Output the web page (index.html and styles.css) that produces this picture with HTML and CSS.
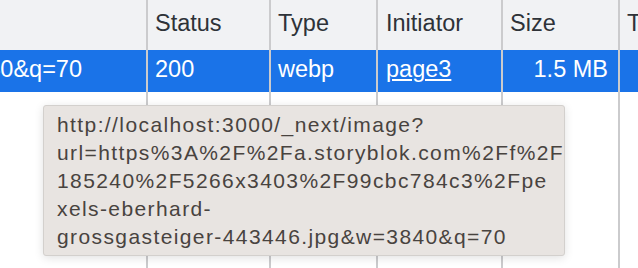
FILE: index.html
```html
<!DOCTYPE html>
<html lang="en">
<head>
    <meta charset="UTF-8">
    <meta name="viewport" content="width=device-width, initial-scale=1.0">
    <title>Network</title>
    <link rel="stylesheet" href="styles.css">
</head>
<body>
    <div class="table">
        <div class="row head">
            <div class="cell c-name"></div>
            <div class="cell c-status">Status</div>
            <div class="cell c-type">Type</div>
            <div class="cell c-init">Initiator</div>
            <div class="cell c-size">Size</div>
            <div class="cell c-time">Time</div>
        </div>
        <div class="row selected">
            <div class="cell c-name name-tail">image?url=https%3A%2F%2Fa.storyblok.com%2Ff%2F185240%2F5266x3403%2F99cbc784c3%2Fpexels-eberhard-grossgasteiger-443446.jpg&amp;w=3840&amp;q=70</div>
            <div class="cell c-status">200</div>
            <div class="cell c-type">webp</div>
            <div class="cell c-init"><a href="#">page3</a></div>
            <div class="cell c-size num">1.5 MB</div>
            <div class="cell c-time"></div>
        </div>
        <div class="row filler">
            <div class="cell c-name"></div>
            <div class="cell c-status"></div>
            <div class="cell c-type"></div>
            <div class="cell c-init"></div>
            <div class="cell c-size"></div>
            <div class="cell c-time"></div>
        </div>
    </div>

    <div class="tooltip">
        http://localhost:3000/_next/image?<br>
        url=https%3A%2F%2Fa.storyblok.com%2Ff%2F<br>
        185240%2F5266x3403%2F99cbc784c3%2Fpe<br>
        xels-eberhard-<br>
        grossgasteiger-443446.jpg&amp;w=3840&amp;q=70
    </div>
</body>
</html>
```

FILE: styles.css
```css
body { margin: 0; height: 268px; overflow: hidden; background: #fff; font-family: "Liberation Sans", Arial, sans-serif; position: relative; }
.table { display: flex; flex-direction: column; height: 100%; }
.row { display: flex; }
.cell { box-sizing: border-box; border-right: 2px solid #cbcbcd; font-size: 23.5px; line-height: 26px; padding: 0 7px; white-space: nowrap; overflow: hidden; }
.c-name { width: 148px; }
.c-status { width: 123px; }
.c-type { width: 107px; }
.c-init { width: 125px; padding-left: 8px; }
.c-size { width: 117px; }
.c-time { flex: 1; border-right: none; }

.head { height: 50px; background: #f1f2f4; color: #2e3238; }
.head .cell { padding-top: 10px; }

.selected { height: 42px; background: #1a73e8; color: #fff; }
.selected .cell { padding-top: 6px; }
.selected a { color: #fff; }
.name-tail { display: flex; justify-content: flex-end; padding-right: 64px; }
.num { text-align: right; padding-right: 10px; }

.filler { flex: 1; }

.tooltip { position: absolute; left: 43px; top: 105px; width: 522px; height: 151px; box-sizing: border-box; padding: 5px 3px 4px 13px; background: #e8e4e1; border: 1px solid #d3d0cd; border-radius: 3px; box-shadow: 0 2px 10px rgba(0,0,0,0.12); color: #48433f; font-size: 21px; line-height: 28px; letter-spacing: 1.4px; white-space: nowrap; }
```
